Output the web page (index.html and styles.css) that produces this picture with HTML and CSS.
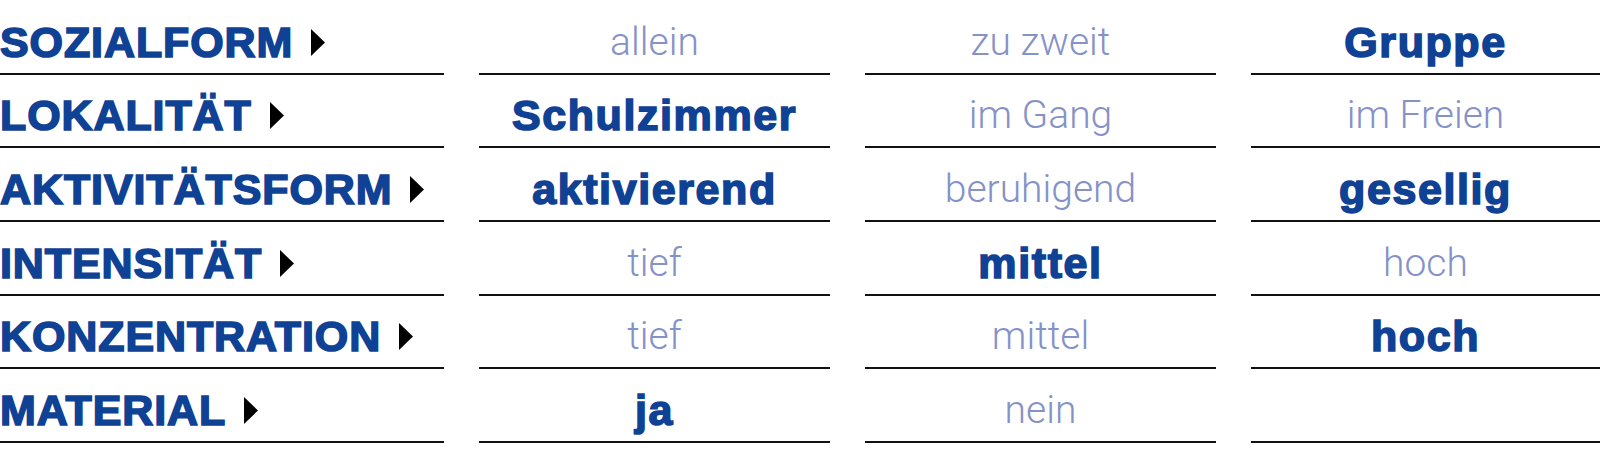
FILE: index.html
```html
<!DOCTYPE html>
<html lang="de">
<head>
<meta charset="utf-8">
<title>Kriterien</title>
<link rel="stylesheet" href="styles.css">
</head>
<body>
<div class="grid">
  <div class="cell label"><span>SOZIALFORM</span><svg class="tri" viewBox="0 0 14 27" width="14" height="27"><path d="M0 0L14 13.5L0 27Z"/></svg></div>
  <div class="cell off">allein</div>
  <div class="cell off">zu zweit</div>
  <div class="cell on">Gruppe</div>

  <div class="cell label"><span>LOKALITÄT</span><svg class="tri" viewBox="0 0 14 27" width="14" height="27"><path d="M0 0L14 13.5L0 27Z"/></svg></div>
  <div class="cell on">Schulzimmer</div>
  <div class="cell off">im Gang</div>
  <div class="cell off">im Freien</div>

  <div class="cell label"><span>AKTIVITÄTSFORM</span><svg class="tri" viewBox="0 0 14 27" width="14" height="27"><path d="M0 0L14 13.5L0 27Z"/></svg></div>
  <div class="cell on">aktivierend</div>
  <div class="cell off">beruhigend</div>
  <div class="cell on">gesellig</div>

  <div class="cell label"><span>INTENSITÄT</span><svg class="tri" viewBox="0 0 14 27" width="14" height="27"><path d="M0 0L14 13.5L0 27Z"/></svg></div>
  <div class="cell off">tief</div>
  <div class="cell on">mittel</div>
  <div class="cell off">hoch</div>

  <div class="cell label"><span>KONZENTRATION</span><svg class="tri" viewBox="0 0 14 27" width="14" height="27"><path d="M0 0L14 13.5L0 27Z"/></svg></div>
  <div class="cell off">tief</div>
  <div class="cell off">mittel</div>
  <div class="cell on">hoch</div>

  <div class="cell label"><span>MATERIAL</span><svg class="tri" viewBox="0 0 14 27" width="14" height="27"><path d="M0 0L14 13.5L0 27Z"/></svg></div>
  <div class="cell on">ja</div>
  <div class="cell off">nein</div>
  <div class="cell off"></div>
</div>
</body>
</html>
```
FILE: styles.css
```css
html, body {
  margin: 0;
  padding: 0;
  background: #fff;
}

.grid {
  display: grid;
  grid-template-columns: 444px 351px 351px 1fr;
  grid-template-rows: repeat(6, 73.7px);
  column-gap: 35px;
  width: 1600px;
  padding-top: 1px;
}

.cell {
  display: flex;
  align-items: flex-end;
  justify-content: center;
  border-bottom: 2px solid #111;
  padding-bottom: 9px;
  box-sizing: border-box;
  line-height: 1;
  white-space: nowrap;
}

.label {
  justify-content: flex-start;
  font-family: "Liberation Sans", Arial, sans-serif;
  font-weight: 700;
  font-size: 43px;
  letter-spacing: 0.9px;
  color: #0f4195;
  -webkit-text-stroke: 1.6px #0f4195;
}

.tri {
  display: block;
  flex: none;
  margin-left: 18px;
  margin-bottom: 8px;
  fill: #000;
}

.on {
  font-family: "Liberation Sans", Arial, sans-serif;
  font-weight: 700;
  font-size: 43px;
  letter-spacing: 1.6px;
  color: #0f4195;
  -webkit-text-stroke: 1.6px #0f4195;
}

.off {
  font-family: Roboto, "Liberation Sans", sans-serif;
  font-weight: 300;
  font-size: 39px;
  color: #8592c8;
  padding-bottom: 11px;
}
```
